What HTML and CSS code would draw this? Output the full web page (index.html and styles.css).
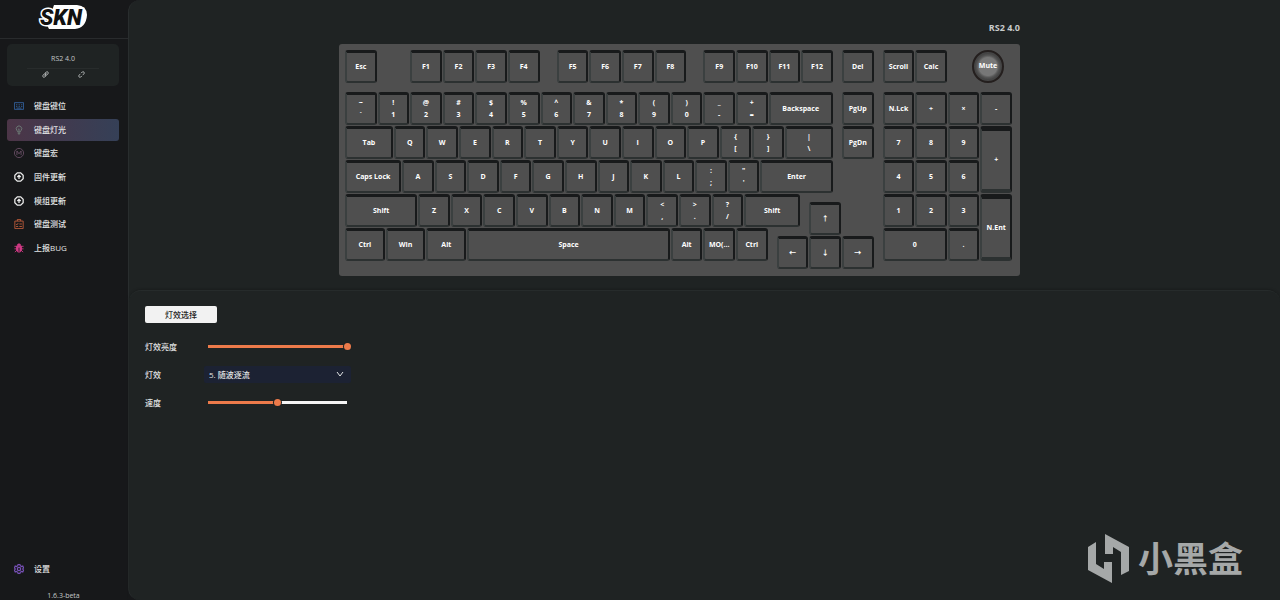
FILE: index.html
```html
<!DOCTYPE html>
<html lang="zh-CN">
<head>
    <meta charset="UTF-8">
    <meta name="viewport" content="width=device-width, initial-scale=1.0">
    <title>SKN - RS2 4.0</title>
    <link rel="stylesheet" href="styles.css">
</head>
<body>
    <div class="app">
        <aside class="sidebar">
            <div class="logo">
                <svg width="50" height="28" viewBox="0 0 50 28" role="img" aria-label="SKN">
                    <path d="M16 2 H39 Q49 3 49 12 Q48 25 37 26 H11 L9 22 Z" fill="#fff"/>
                    <text class="logo-text" x="2" y="22">SKN</text>
                </svg>
            </div>

            <div class="device">
                <div class="device-name">RS2 4.0</div>
                <div class="device-links">
                    <button type="button" aria-label="连接">
                        <svg width="7" height="7" viewBox="0 0 16 16"><path d="M6 10 L10 6 M7 5 L10 2 Q12 1 14 3 Q15 5 13 7 L10 10 Q8 11 6 9 M9 11 L6 14 Q4 15 2 13 Q1 11 3 9 L6 6 Q8 5 10 7"/></svg>
                    </button>
                    <button type="button" aria-label="断开">
                        <svg width="7" height="7" viewBox="0 0 16 16"><path d="M7 5 L10 2 Q12 1 14 3 Q15 5 13 7 L11 9 M9 11 L6 14 Q4 15 2 13 Q1 11 3 9 L5 7"/></svg>
                    </button>
                </div>
            </div>

            <nav class="menu">
                <a class="menu-item" href="#keys">
                    <svg class="blue" viewBox="0 0 24 24"><path d="M1 4 H23 V20 H1 Z M5 9 H8 M11 9 H14 M17 9 H20 M5 13 H8 M11 13 H14 M17 13 H20 M6 17 H18"/></svg>
                    键盘键位
                </a>
                <a class="menu-item active" href="#light">
                    <svg class="green" viewBox="0 0 24 24"><path d="M9 17 Q9 15 7 13 A6.500 6.500 0 1 1 17 13 Q15 15 15 17 Z M9 20 H15 M11 23 H13 M12 17 V11 L10 9 M12 11 L14 9"/></svg>
                    键盘灯光
                </a>
                <a class="menu-item" href="#macro">
                    <svg class="mauve" viewBox="0 0 24 24"><circle cx="12" cy="12" r="11"/><path d="M7 17 V7 L12 14 L17 7 V17"/></svg>
                    键盘宏
                </a>
                <a class="menu-item" href="#firmware">
                    <svg class="white" viewBox="0 0 24 24"><path d="M8 2 H16 L22 8 V16 L16 22 H8 L2 16 V8 Z"/><path d="M12 17 V9 M8 12 L12 8 L16 12"/></svg>
                    固件更新
                </a>
                <a class="menu-item" href="#module">
                    <svg class="white" viewBox="0 0 24 24"><path d="M8 2 H16 L22 8 V16 L16 22 H8 L2 16 V8 Z"/><path d="M12 17 V9 M8 12 L12 8 L16 12"/></svg>
                    模组更新
                </a>
                <a class="menu-item" href="#test">
                    <svg class="orange" viewBox="0 0 24 24"><path d="M2 5 H22 V23 H2 Z M8 5 V1 H16 V5 M5 12 L7 14 L10 10 M13 12 H19 M5 18 H10 M13 18 H19"/></svg>
                    键盘测试
                </a>
                <a class="menu-item" href="#bug">
                    <svg class="pink" viewBox="0 0 24 24"><path d="M6 8 H18 V17 Q17 22 12 22 Q7 22 6 17 Z M8 6 Q8 2 12 2 Q16 2 16 6 Z" fill="currentColor"/><path d="M1 8 H23 M1 14 H23 M2 22 L7 17 M22 22 L17 17"/><path d="M12 11 V21" stroke="#17181a"/></svg>
                    上报BUG
                </a>
            </nav>

            <div class="sidebar-bottom">
                <a class="menu-item" href="#settings">
                    <svg class="purple" viewBox="0 0 24 24"><path d="M9 4 L10 1 H14 L15 4 L18 6 L21 5 L23 9 L21 12 L23 15 L21 19 L18 18 L15 20 L14 23 H10 L9 20 L6 18 L3 19 L1 15 L3 12 L1 9 L3 5 L6 6 Z"/><circle cx="12" cy="12" r="4"/></svg>
                    设置
                </a>
                <div class="version">1.6.3-beta</div>
            </div>
        </aside>

        <main class="main">
            <section class="stage">
                <div class="board">
                    <div class="board-title">RS2 4.0</div>
                    <div class="keyboard" id="keyboard"></div>
                </div>
            </section>

            <section class="panel">
                <button type="button" class="select-btn">灯效选择</button>
                <div class="row">
                    <label for="brightness">灯效亮度</label>
                    <input type="range" id="brightness" class="full" min="0" max="100" value="100">
                </div>
                <div class="row">
                    <label for="effect">灯效</label>
                    <div class="dropdown">
                        <select id="effect">
                            <option>5. 随波逐流</option>
                        </select>
                        <svg class="arrow" width="8" height="6" viewBox="0 0 8 6"><path d="M1 1 L4 5 L7 1"/></svg>
                    </div>
                </div>
                <div class="row">
                    <label for="speed">速度</label>
                    <input type="range" id="speed" class="half" min="0" max="100" value="50">
                </div>
            </section>
        </main>

        <div class="watermark">
            <svg width="42" height="50" viewBox="0 0 42 50">
                <path d="M17 0 L41 13 V37 L33 41 V18 L25 13 V20 H17 Z M0 13 L8 8 V30 L16 35 V28 H24 V49 L0 36 Z"/>
            </svg>
            <span>小黑盒</span>
        </div>
    </div>

    <script src="script.js"></script>
</body>
</html>
```
FILE: styles.css
```css
* {
    box-sizing: border-box;
}

body {
    margin: 0;
    background-color: #17181a;
    color: #e3e5e5;
    font-family: "Open Sans", "Noto Sans CJK SC", sans-serif;
    font-size: 8px;
    font-weight: 500;
    line-height: 12px;
}

button, select {
    font-family: inherit;
    font-size: inherit;
    font-weight: inherit;
    line-height: inherit;
    color: inherit;
    border: none;
    padding: 0;
    cursor: pointer;
}

svg {
    fill: none;
    stroke: currentColor;
    stroke-width: 2;
}

.app {
    position: relative;
    display: flex;
    min-height: 100vh;
}

/* sidebar */
.sidebar {
    flex: 0 0 128px;
    display: flex;
    flex-direction: column;
}

.logo {
    height: 39px;
    padding: 3px 0 0 38px;
    border-bottom: 1px solid #292b2d;
}

.logo svg {
    display: block;
    stroke: none;
}

.logo-text {
    font-family: Roboto, sans-serif;
    font-size: 22px;
    font-weight: 900;
    font-style: italic;
    fill: #111;
    stroke: #fff;
    stroke-width: 3px;
    paint-order: stroke;
}

.device {
    height: 42px;
    margin: 5px 9px 9px 7px;
    padding: 9px 20px 0;
    border-radius: 5px;
    background-color: #1f2323;
    color: #c5c8c8;
    font-size: 7px;
    text-align: center;
}

.device-name {
    padding-bottom: 3px;
    border-bottom: 1px solid #282c2c;
}

.device-links {
    display: flex;
    justify-content: space-around;
}

.device-links button {
    height: 14px;
    background: none;
}

.menu {
    display: flex;
    flex-direction: column;
    justify-content: space-between;
    height: 164px;
    padding: 0 9px 0 7px;
}

.menu-item {
    display: flex;
    align-items: center;
    gap: 10px;
    height: 22px;
    padding-left: 7px;
    border-radius: 3px;
    color: #e3e5e5;
    text-decoration: none;
}

.menu-item svg {
    width: 10px;
    height: 10px;
}

.menu-item.active {
    background: linear-gradient(90deg, #4c3547, #354057);
}

.menu-item .blue { color: #3568a8; }
.menu-item .green { color: #72857d; }
.menu-item .mauve { color: #6c5069; }
.menu-item .white { color: #eee; stroke-width: 3; }
.menu-item .orange { color: #c9603c; }
.menu-item .pink { color: #d23a86; }
.menu-item .purple { color: #7650b5; stroke-width: 3; }

.sidebar-bottom {
    margin-top: auto;
    padding: 0 8px 0 7px;
}

.version {
    margin-top: 11px;
    color: #c5c8c8;
    font-size: 7px;
    line-height: 9px;
    text-align: center;
}

/* main area */
.main {
    flex: 1;
    display: flex;
    flex-direction: column;
    border-left: 1px solid #292d2e;
    border-radius: 12px 0 0 12px;
    background-color: #1f2323;
}

.stage {
    display: flex;
    justify-content: center;
    padding: 22px 50px 14px 0;
}

.board {
    width: 681px;
}

.board-title {
    margin-bottom: 10px;
    color: #c8cbcb;
    font-size: 9px;
    font-weight: 700;
    text-align: right;
}

.keyboard {
    display: grid;
    grid-template-columns: repeat(82, 1fr);
    grid-template-rows: repeat(26, 1fr);
    height: 232px;
    padding: 6px 7px 6px 6px;
    border-radius: 3px;
    background-color: #4f4f4f;
}

.key {
    display: flex;
    flex-direction: column;
    align-items: center;
    justify-content: center;
    min-width: 0;
    min-height: 0;
    margin: 0 1px 1px 0;
    border-style: solid;
    border-width: 3px 2px 2px 2px;
    border-color: #181a1b #181a1b #2c3131 #3b4040;
    border-radius: 3px;
    background-color: #4f4f4f;
    color: #fff;
    font-size: 7px;
    font-weight: 700;
    line-height: 12px;
    white-space: nowrap;
}

.key.tall {
    border-top-width: 5px;
    border-bottom-width: 4px;
}

.key.knob {
    border: 2px solid #241f1e;
    border-radius: 50%;
    background: radial-gradient(circle, #777 0 9px, #555 11px, #444 13px);
}

/* lighting panel */
.panel {
    flex: 1;
    padding: 15px 16px;
    border-top: 1px solid #262b2b;
    border-radius: 12px 12px 0 0;
    box-shadow: 0 -1px 2px #1a1d1d;
}

.select-btn {
    display: block;
    width: 72px;
    height: 17px;
    margin-bottom: 15px;
    border-radius: 2px;
    background-color: #f2f2f2;
    color: #222;
}

.row {
    display: flex;
    align-items: center;
    height: 17px;
    margin-bottom: 11px;
}

.row label {
    width: 59px;
}

input[type="range"] {
    appearance: none;
    width: 147px;
    height: 9px;
    margin: 0;
    background: none;
}

input[type="range"]::-webkit-slider-runnable-track {
    height: 3px;
    background: linear-gradient(90deg, #ec7a4a 50%, #f5f5f5 50%) no-repeat 4px 0 / calc(100% - 8px) 100%;
}

input[type="range"].full::-webkit-slider-runnable-track {
    background-image: linear-gradient(#ec7a4a, #ec7a4a);
}

input[type="range"]::-webkit-slider-thumb {
    appearance: none;
    width: 7px;
    height: 7px;
    margin-top: -2px;
    border-radius: 50%;
    background-color: #ec7a4a;
    box-shadow: 0 0 0 1px #1f2323;
}

.dropdown {
    position: relative;
    width: 147px;
}

.dropdown select {
    display: block;
    appearance: none;
    width: 100%;
    height: 17px;
    padding-left: 5px;
    border-radius: 2px;
    background-color: #1c2233;
}

.dropdown .arrow {
    position: absolute;
    top: 5px;
    right: 7px;
    stroke-width: 1;
    pointer-events: none;
}

.watermark {
    position: absolute;
    right: 37px;
    bottom: 16px;
    display: flex;
    align-items: center;
    gap: 8px;
    color: #a5a8a8;
    font-size: 35px;
    font-weight: 700;
    line-height: 50px;
    pointer-events: none;
}

.watermark svg {
    fill: currentColor;
    stroke: none;
}
```
FILE: script.js
```js
// [label, x, y, width, height, upper label] in key units
var keys = [
    ['Esc', 0, 0], ['Del', 15.25, 0], ['Scroll', 16.5, 0], ['Calc', 17.5, 0], ['Mute', 19.25, 0],
    ['Backspace', 13, 1.25, 2], ['PgUp', 15.25, 1.25],
    ['Tab', 0, 2.25, 1.5], ['\\', 13.5, 2.25, 1.5, 1, '|'], ['PgDn', 15.25, 2.25], ['+', 19.5, 2.25, 1, 2],
    ['Caps Lock', 0, 3.25, 1.75], ['Enter', 12.75, 3.25, 2.25],
    ['Shift', 0, 4.25, 2.25], ['Shift', 12.25, 4.25, 1.75], ['↑', 14.25, 4.5], ['N.Ent', 19.5, 4.25, 1, 2],
    ['Ctrl', 0, 5.25, 1.25], ['Win', 1.25, 5.25, 1.25], ['Alt', 2.5, 5.25, 1.25], ['Space', 3.75, 5.25, 6.25],
    ['0', 16.5, 5.25, 2], ['.', 18.5, 5.25]
];

function addRun(labels, x, y) {
    labels.split(' ').forEach(function (pair, i) {
        var upper = pair.length === 2 && !/[A-Z]/.test(pair) ? pair[0] : '';
        keys.push([upper ? pair[1] : pair, x + i, y, 1, 1, upper]);
    });
}

addRun('F1 F2 F3 F4', 2, 0);
addRun('F5 F6 F7 F8', 6.5, 0);
addRun('F9 F10 F11 F12', 11, 0);
addRun('~` !1 @2 #3 $4 %5 ^6 &7 *8 (9 )0 _- +=', 0, 1.25);
addRun('N.Lck ÷ × -', 16.5, 1.25);
addRun('Q W E R T Y U I O P {[ }]', 1.5, 2.25);
addRun('7 8 9', 16.5, 2.25);
addRun('A S D F G H J K L :; "\'', 1.75, 3.25);
addRun('4 5 6', 16.5, 3.25);
addRun('Z X C V B N M <, >. ?/', 2.25, 4.25);
addRun('1 2 3', 16.5, 4.25);
addRun('Alt MO(... Ctrl', 10, 5.25);
addRun('← ↓ →', 13.25, 5.5);

var keyboard = document.getElementById('keyboard');

keys.sort(function (a, b) {
    return a[2] - b[2] || a[1] - b[1];
});

keys.forEach(function (key) {
    var w = key[3] || 1;
    var h = key[4] || 1;
    var button = document.createElement('button');
    button.type = 'button';
    button.className = 'key' + (h > 1 ? ' tall' : '') + (key[0] === 'Mute' ? ' knob' : '');
    button.style.gridColumn = (key[1] * 4 + 1) + ' / span ' + (w * 4);
    button.style.gridRow = (key[2] * 4 + 1) + ' / span ' + (h * 4);
    [key[5], key[0]].forEach(function (text) {
        if (text) {
            var span = document.createElement('span');
            span.textContent = text;
            button.appendChild(span);
        }
    });
    keyboard.appendChild(button);
});
```
